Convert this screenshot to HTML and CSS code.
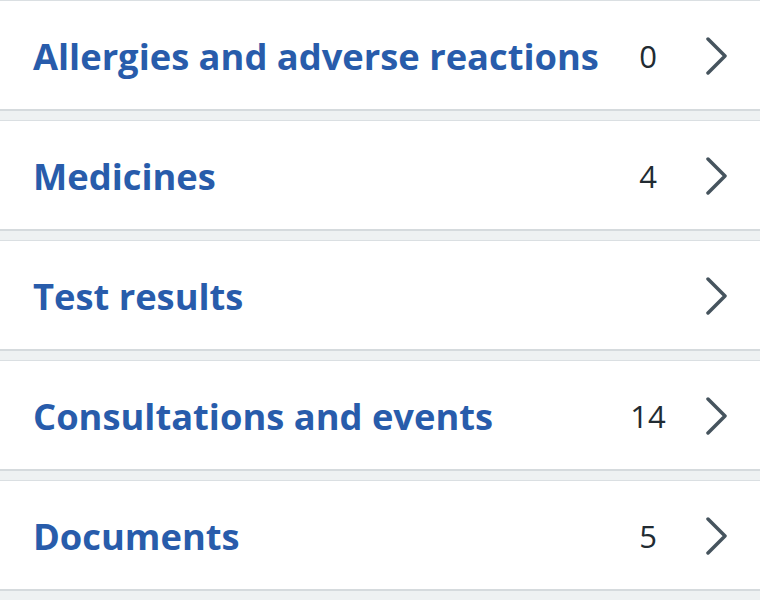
FILE: index.html
```html
<!DOCTYPE html>
<html lang="en">
<head>
<meta charset="utf-8">
<title>Health record</title>
<link rel="stylesheet" href="styles.css">
</head>
<body>
<ul class="list">
  <li class="row"><span class="title">Allergies and adverse reactions</span><span class="count">0</span><svg class="chev" viewBox="0 0 24 38"><polyline points="3,2 20,19 3,36"/></svg></li>
  <li class="row"><span class="title">Medicines</span><span class="count">4</span><svg class="chev" viewBox="0 0 24 38"><polyline points="3,2 20,19 3,36"/></svg></li>
  <li class="row"><span class="title">Test results</span><span class="count"></span><svg class="chev" viewBox="0 0 24 38"><polyline points="3,2 20,19 3,36"/></svg></li>
  <li class="row"><span class="title">Consultations and events</span><span class="count">14</span><svg class="chev" viewBox="0 0 24 38"><polyline points="3,2 20,19 3,36"/></svg></li>
  <li class="row"><span class="title">Documents</span><span class="count">5</span><svg class="chev" viewBox="0 0 24 38"><polyline points="3,2 20,19 3,36"/></svg></li>
</ul>
</body>
</html>
```
FILE: styles.css
```css
html, body {
  margin: 0;
  padding: 0;
  background: #eef1f2;
  font-family: "Open Sans", "Noto Sans", sans-serif;
}
.list {
  list-style: none;
  margin: 0;
  padding: 0;
}
.row {
  display: flex;
  align-items: center;
  box-sizing: border-box;
  height: 111px;
  padding: 2px 31px 0 33px;
  margin-bottom: 9px;
  background: #fff;
  border-top: 1px solid #dadfe2;
  border-bottom: 2px solid #d5dadd;
}
.title {
  flex: 1;
  color: #285cab;
  font-weight: 700;
  font-size: 36.3px;
}
.count {
  width: 44px;
  text-align: center;
  color: #212b32;
  font-size: 31px;
}
.chev {
  width: 24px;
  height: 38px;
  margin-left: 35px;
  fill: none;
  stroke: #46545e;
  stroke-width: 3.5;
  stroke-linecap: round;
  stroke-linejoin: round;
}
```
